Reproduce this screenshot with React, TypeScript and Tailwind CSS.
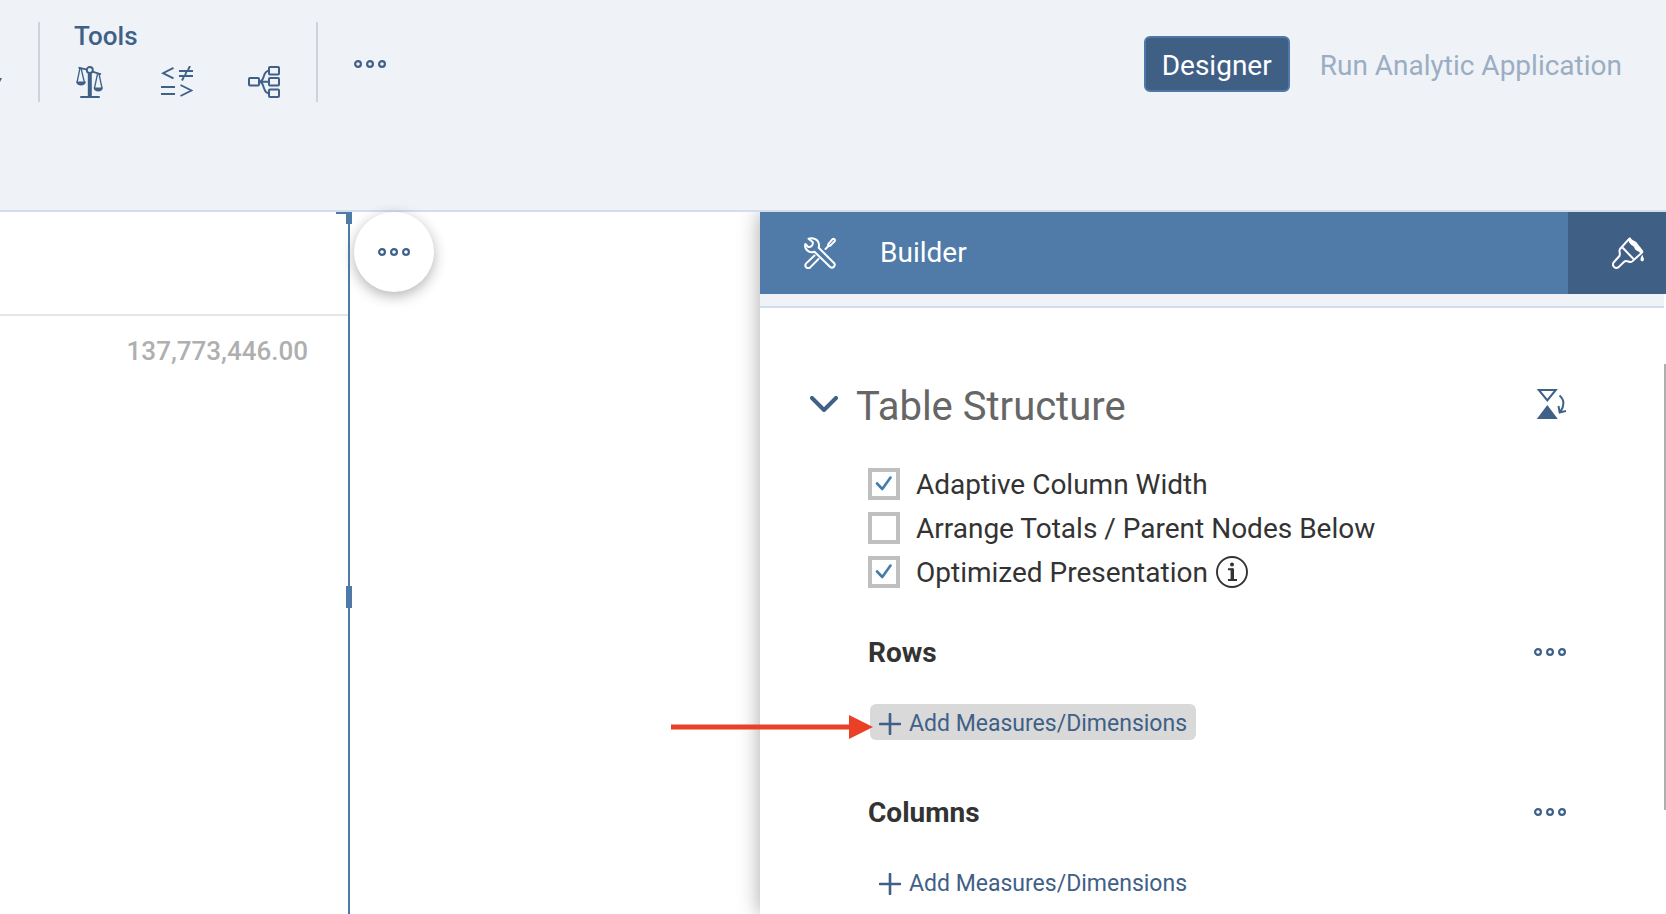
import type { ReactNode } from "react";

function MoreIcon() {
  return (
    <svg width="32" height="8" viewBox="0 0 32 8" fill="none" stroke="currentColor" strokeWidth="2.200" aria-hidden="true">
      <circle cx="4" cy="4" r="2.900" />
      <circle cx="16" cy="4" r="2.900" />
      <circle cx="28" cy="4" r="2.900" />
    </svg>
  );
}

function ScalesIcon() {
  return (
    <svg width="32" height="32" viewBox="0 0 32 32" fill="none" stroke="currentColor" aria-hidden="true">
      <circle cx="15.800" cy="4" r="3" strokeWidth="1.900" />
      <path d="M4.500 1.600 13 3.600M18.500 5.600 27 8.400" strokeWidth="2" />
      <path d="M6 2 3.100 16M7 2l3.300 14M23.500 8 20.500 22M25 8l3 14" strokeWidth="1.300" />
      <path d="M2 15.500h10c-.3 2.400-2.400 4-5 4s-4.700-1.600-5-4ZM19.500 21.500h9.500c-.3 2.400-2.200 4-4.700 4s-4.500-1.600-4.800-4Z" fill="currentColor" stroke="none" />
      <path d="M15.800 7v24" strokeWidth="4" />
      <path d="M7 31h18" strokeWidth="2" strokeLinecap="round" />
    </svg>
  );
}

function CompareIcon() {
  return (
    <svg width="32" height="32" viewBox="0 0 32 32" fill="none" stroke="currentColor" strokeWidth="1.900" aria-hidden="true">
      <path d="M12.500 1.800 2 7.200l10.500 5.200M18 5h14M18 10h14M29 0 27 4M25.500 5.500 24 9.500M22.800 11 21 14.500" />
      <path d="M0 21h14M0 28h14M19.500 19 30.500 24.500 19.500 30" />
    </svg>
  );
}

function HierarchyIcon() {
  return (
    <svg width="32" height="32" viewBox="0 0 32 32" fill="none" stroke="currentColor" strokeWidth="2" aria-hidden="true">
      <rect x="1" y="12" width="10" height="7.500" rx="1" />
      <rect x="21" y="1" width="10" height="7.500" rx="1" />
      <rect x="21" y="12" width="10" height="7.500" rx="1" />
      <rect x="21" y="23.500" width="10" height="7.500" rx="1" />
      <path d="M11 15.800h10M11.500 15.800c6-1 2.500-10.800 9.500-11M11.500 15.800c6 1 2.500 11.200 9.500 11.400" strokeWidth="1.900" />
    </svg>
  );
}

function BuilderIcon() {
  return (
    <svg width="32" height="32" viewBox="0 0 32 32" fill="none" stroke="currentColor" strokeWidth="2" strokeLinejoin="round" strokeLinecap="round" aria-hidden="true">
      <path d="M4.500 1.800C9 .2 14.500 2.500 15 7.500c.1 1.200 0 2.400-.3 3.300L30 26c2.200 2.600-1.200 6-3.800 4L10.500 14.800C6 16.500 1.200 13.500 1 8.500L1.400 7 4 9.800c2.600.8 5.500-1.600 4.700-4.800L4.500 1.800Z" />
      <path d="M10.500 18.500 2.200 26.400c-2.400 2.800 1 6.200 3.800 4.200L14.500 22M21.500 12l3-3" />
      <path d="M24.500 6.800 28.500 2.200c1.500-.9 3 .3 2.300 1.800L26.600 8.400c-1.800 1.200-3.300-.2-2.100-1.600Z" />
    </svg>
  );
}

function PaintIcon() {
  return (
    <svg width="32" height="32" viewBox="0 0 32 32" fill="none" stroke="currentColor" strokeWidth="2" strokeLinejoin="round" aria-hidden="true">
      <path d="M17.800 1.200 8 12c-1.500 2.300.8 4.500-.6 7L1.600 25.500c-2.200 3.300 1.800 7 5 4.600l5.600-5.400c2.500-1.800 4.200.6 6.600.4 1.500-.4 2.500-1.600 3.500-2.500l8.500-7.800" />
      <path d="m10.500 10.500 11 11.500" />
      <path d="M18 0c1.500 3 3.500 3.200 5.500 4.500S26.500 8.500 28 9.800l3.500 4.500-3 2.200c-1-2-2.800-2-4.500-3.200s-1.300-3-3-4.200-3.500-2.300-5-6.100Z" fill="currentColor" stroke="none" />
      <path d="M30.200 17.500c-.8 2-1.700 3.500-1.700 5 0 2.400 3.400 2.400 3.400 0 0-1.500-.9-3-1.700-5Z" fill="currentColor" stroke="none" />
    </svg>
  );
}

function SwapAxesIcon() {
  return (
    <svg width="32" height="32" viewBox="0 0 32 32" fill="none" stroke="currentColor" aria-hidden="true">
      <path d="M4.800 2h17L13.300 12.500Z" strokeWidth="2" />
      <path d="M13.300 17 23.800 31h-21Z" fill="currentColor" stroke="none" />
      <path d="M25.500 7.500c5 4 5 10.500 1 16M24.500 18l1.200 6.500 6.300-1.500" strokeWidth="2" />
    </svg>
  );
}

function InfoIcon() {
  return (
    <svg width="32" height="32" viewBox="0 0 32 32" fill="none" stroke="currentColor" aria-hidden="true">
      <circle cx="16" cy="16" r="15" strokeWidth="1.900" />
      <circle cx="16" cy="8.500" r="2" fill="currentColor" stroke="none" />
      <path d="M12 13.300h5M12 24h9" strokeWidth="1.900" />
      <path d="M16.300 12.500V24" strokeWidth="3.400" />
    </svg>
  );
}

function PlusIcon() {
  return (
    <svg width="22" height="22" viewBox="0 0 22 22" stroke="currentColor" strokeWidth="2.600" strokeLinecap="round" aria-hidden="true">
      <path d="M11 1v20M1 11h20" />
    </svg>
  );
}

function Option({ id, label, checked = false, children }: { id: string; label: string; checked?: boolean; children?: ReactNode }) {
  return (
    <div className="flex h-8 items-center">
      <span className="relative size-8">
        <input
          id={id}
          type="checkbox"
          defaultChecked={checked}
          className="peer block size-8 appearance-none border-4 border-[#bfbfbf] bg-white"
        />
        <svg
          className="pointer-events-none absolute inset-0 hidden text-[#427cac] peer-checked:block"
          viewBox="0 0 32 32"
          fill="none"
          stroke="currentColor"
          strokeWidth="2.600"
          strokeLinecap="round"
          strokeLinejoin="round"
          aria-hidden="true"
        >
          <path d="m9 15.500 5.300 5.500L22.500 9.500" />
        </svg>
      </span>
      <label htmlFor={id} className="pt-0.5 pl-4 text-[28px] leading-8 whitespace-nowrap text-[#333]">
        {label}
      </label>
      {children}
    </div>
  );
}

function Axis({ title, active = false }: { title: string; active?: boolean }) {
  return (
    <section className="flex flex-col gap-8">
      <div className="flex h-10 items-center justify-between">
        <h3 className="pt-0.5 text-[28px] leading-10 font-bold text-[#333]">{title}</h3>
        <button type="button" aria-label={`${title} options`} className="text-[#3f6087]">
          <MoreIcon />
        </button>
      </div>
      <div className="flex h-9">
        <div className="relative ml-0.5">
          <button
            type="button"
            className={`flex h-9 items-center gap-2 rounded-md px-[9px] pt-1 text-[23px] leading-8 whitespace-nowrap text-[#3f6087] ${active ? "bg-[#d9d9d9]" : ""}`}
          >
            <PlusIcon />
            Add Measures/Dimensions
          </button>
          {active && (
            <svg className="pointer-events-none absolute top-2.5 -left-50" width="203" height="26" viewBox="0 0 203 26" fill="#ea4126" aria-hidden="true">
              <path d="M1 10.500h178V1l24 12-24 12v-9.500H1Z" />
            </svg>
          )}
        </div>
      </div>
    </section>
  );
}

export default function App() {
  return (
    <div className="flex h-screen flex-col overflow-hidden bg-white font-[Roboto,'Liberation_Sans',sans-serif]">
      <header className="flex h-[212px] shrink-0 items-start justify-between border-b-2 border-[#d2deec] bg-[#eff3f8] text-[#3f6087]">
        <div className="flex pt-[22px]">
          <div className="flex h-20 w-10 items-center border-r-2 border-[#cfd3d9] pt-9">
            <svg width="2" height="4" viewBox="0 0 2 4" fill="currentColor" aria-hidden="true">
              <path d="M0 0h2L0 4Z" />
            </svg>
          </div>
          <section className="h-20 border-r-2 border-[#cfd3d9] pr-9 pl-[34px]" aria-label="Tools">
            <h2 className="text-[26px] leading-7 font-medium">Tools</h2>
            <div className="flex gap-[55px] pt-4">
              <button type="button" aria-label="Compare scales"><ScalesIcon /></button>
              <button type="button" aria-label="Conditions"><CompareIcon /></button>
              <button type="button" aria-label="Hierarchy"><HierarchyIcon /></button>
            </div>
          </section>
          <button type="button" aria-label="More tools" className="flex h-20 items-center pt-1 pl-9">
            <MoreIcon />
          </button>
        </div>
        <nav className="flex gap-[30px] pt-9 pr-11 text-[28px] leading-[48px]">
          <button type="button" className="h-14 rounded-md border-2 border-[#4f7aa8] bg-[#3f5f85] px-4 pt-1 text-white">
            Designer
          </button>
          <button type="button" className="h-14 pt-1 whitespace-nowrap text-[#9badc3]">
            Run Analytic Application
          </button>
        </nav>
      </header>

      <main className="flex min-h-0 flex-1">
        <section className="flex min-w-0 flex-1" aria-label="Canvas">
          <div className="relative w-[350px] shrink-0 border-r-2 border-[#4f7aa8]">
            <div className="h-[104px] border-b-2 border-[#e6e6e6]" />
            <p className="pt-[15px] pr-10 text-right text-[26px] leading-10 font-medium text-[#afafaf]">137,773,446.00</p>
            <span className="absolute top-0 -right-1 h-0.5 w-4 bg-[#4f7aa8]" />
            <span className="absolute top-0 -right-1 h-3 w-1.5 bg-[#4f7aa8]" />
            <span className="absolute top-[374px] -right-1 h-[22px] w-1.5 bg-[#4f7aa8]" />
          </div>
          <button
            type="button"
            aria-label="Table actions"
            className="ml-1 flex size-20 shrink-0 items-center justify-center rounded-full bg-white text-[#3f6087] shadow-[0_4px_14px_rgba(0,0,0,0.3)]"
          >
            <MoreIcon />
          </button>
        </section>

        <aside className="relative flex w-[906px] shrink-0 flex-col bg-white shadow-[0_0_20px_rgba(0,0,0,0.35)] [clip-path:inset(0_0_0_-240px)]">
          <div className="flex h-[82px] shrink-0 bg-[#507ba8] text-white">
            <div className="flex flex-1 items-center gap-11 pl-11">
              <BuilderIcon />
              <h2 className="text-[28px] leading-10">Builder</h2>
            </div>
            <button type="button" aria-label="Styling" className="flex w-[98px] items-center bg-[#3f5f85] pl-11">
              <PaintIcon />
            </button>
          </div>
          <div className="mr-0.5 h-3.5 shrink-0 border-b-2 border-[#d2deec] bg-[#eff3f8]" />

          <div className="flex flex-col pt-[72px] pr-[100px] pl-[50px]">
            <div className="flex h-12 items-center justify-between">
              <button type="button" className="flex items-center gap-[18px] text-[#3f6087]">
                <svg width="28" height="16" viewBox="0 0 28 16" fill="none" stroke="currentColor" strokeWidth="4" strokeLinecap="round" strokeLinejoin="round" aria-hidden="true">
                  <path d="m2 2 12 12L26 2" />
                </svg>
                <span className="pt-1.5 text-[40px] leading-[48px] text-[#666]">Table Structure</span>
              </button>
              <button type="button" aria-label="Swap axes" className="text-[#3f6087]">
                <SwapAxesIcon />
              </button>
            </div>

            <div className="flex flex-col gap-11 pt-10 pl-[58px]">
              <div className="flex flex-col gap-3">
                <Option id="adaptive" label="Adaptive Column Width" checked />
                <Option id="totals" label="Arrange Totals / Parent Nodes Below" />
                <Option id="optimized" label="Optimized Presentation" checked>
                  <button type="button" aria-label="Information" className="ml-2 text-[#333]">
                    <InfoIcon />
                  </button>
                </Option>
              </div>
              <div className="flex flex-col gap-[52px]">
                <Axis title="Rows" active />
                <Axis title="Columns" />
              </div>
            </div>
          </div>
          <span className="absolute top-[152px] right-0 h-[446px] w-0.5 bg-[#afafaf]" />
        </aside>
      </main>
    </div>
  );
}
